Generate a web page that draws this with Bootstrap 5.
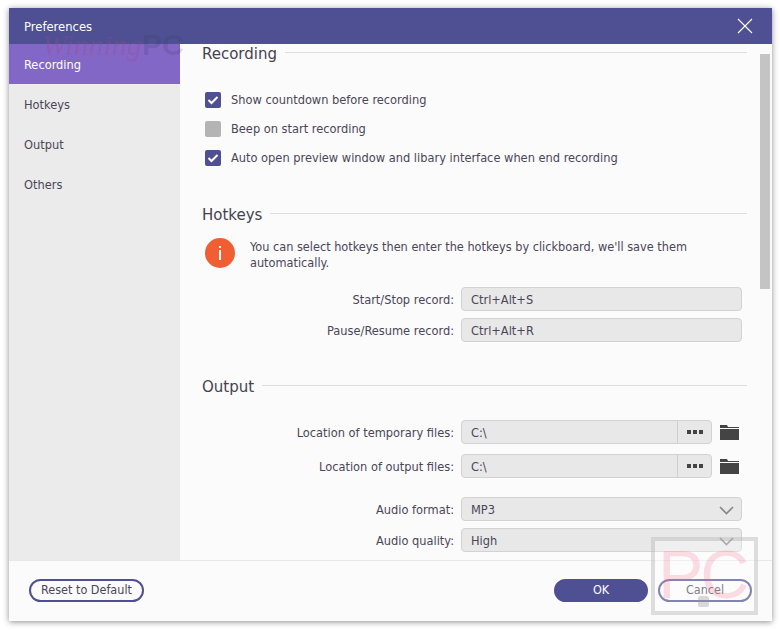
<!DOCTYPE html>
<html lang="en">
<head>
<meta charset="utf-8">
<title>Preferences</title>
<link href="https://cdn.jsdelivr.net/npm/bootstrap@5.3.0/dist/css/bootstrap.min.css" rel="stylesheet">
<style>
html,body{height:100%;}
body{background:#fff;font-family:"DejaVu Sans Condensed","DejaVu Sans","Noto Sans",sans-serif;font-stretch:condensed;font-size:12.7px;color:#4a4658;overflow:hidden;padding:8px 8px 9px 9px;}
.pref-win{position:relative;width:763px;height:613px;background:#fbfbfb;box-shadow:0 1px 6px rgba(0,0,0,.45);}
.pref-title{height:36px;background:#4e5093;color:#fff;padding-left:15px;padding-right:19px;font-size:12.9px;}
.pref-title span{padding-top:2px;}
.pref-body{height:516px;}
.pref-side{width:171px;background:#ebebeb;}
.side-item{height:40px;padding-left:15px;padding-top:1px;font-size:12.7px;color:#4a4658;}
.side-item.on{background:#8367c7;color:#fff;}
.pref-main{width:592px;position:relative;overflow:hidden;padding:0 25px 0 22px;}
.sec-head{height:22px;font-size:16.7px;line-height:22px;color:#45424f;gap:8px;}
.sec-head::after{content:"";flex:1;border-top:1px solid #dedede;margin-top:-2px;}
.chk-list{margin-top:21px;}
.chk-row{height:29px;gap:10px;padding-left:3px;}
.chk-box{width:16px;height:16px;border-radius:2px;background:#4e5093;flex:none;}
.chk-box.off{background:#b4b4b4;}
.pref-main>.sec-head{margin-top:31px;}
.pref-main>.sec-head:first-child{margin-top:-2px;}
.pref-main>.sec-head.s-3{margin-top:33px;}
.info-row{margin-top:13px;height:42px;}
.info-dot{width:30px;height:30px;border-radius:50%;background:#f05f33;margin-left:3px;flex:none;}
.info-copy{padding-left:15px;line-height:16px;padding-top:1px;font-size:12.6px;}
.form-line{height:24px;gap:7px;}
.l-1,.l-2{margin-top:7px;}
.l-3{margin-top:23px;}
.l-4{margin-top:10px;}
.l-5{margin-top:19px;}
.form-lab{width:252px;text-align:right;flex:none;padding-top:2px;}
.fake-box{height:24px;background:#e8e8e8;border:1px solid #d2d2d2;border-radius:4px;padding:2px 7px 0 9px;flex:1;}
.fake-wide{width:281px;flex:none;}
.fake-split{width:251px;flex:none;padding:0;}
.fake-split .val{padding:2px 0 0 9px;flex:1;}
.fake-split .more{width:34px;height:100%;border-left:1px solid #cfcfcf;gap:2px;}
.more i{width:4px;height:4px;background:#444;display:block;}
.fold{margin-left:1px;}
.sb-track{position:absolute;right:2px;top:10px;width:10px;height:235px;background:#c4c4c4;}
.pref-foot{height:61px;padding:0 20px 2px;border-top:1px solid #e8e8e8;}
.pill{height:23px;border:2px solid #4e5093;border-radius:12px;background:#fbfbfb;color:#4a4658;font-size:12.5px;line-height:1;}
.pill-reset{width:115px;}
.pill-fill{width:94px;background:#4e5093;color:#fff;}
.pill-cancel{width:94px;}
.pill-pair{gap:10px;}
.wm-top{position:absolute;left:33px;top:16px;height:42px;gap:0;pointer-events:none;}
.wm-script{font-family:"Liberation Serif",serif;font-style:italic;font-size:30px;line-height:42px;color:rgba(165,70,125,.3);}
.wm-pc{font-family:"Liberation Sans",sans-serif;font-weight:700;font-size:30px;line-height:42px;color:rgba(60,60,90,.2);}
.wm-frame{position:absolute;left:642px;top:529px;width:107px;height:78px;border:4px solid rgba(150,150,150,.3);background:rgba(255,255,255,.3);pointer-events:none;}
.wm-frame span{display:block;font-family:"Liberation Sans",sans-serif;font-size:68px;line-height:66px;color:rgba(240,90,120,.2);padding-left:3px;letter-spacing:-3px;white-space:nowrap;}
.wm-dot{position:absolute;left:43px;bottom:4px;width:11px;height:11px;background:rgba(150,150,150,.35);border-radius:2px;}
</style>
</head>
<body>
<div class="pref-win d-flex flex-column">
  <div class="pref-title d-flex align-items-center justify-content-between">
    <span>Preferences</span>
    <svg width="16" height="16" viewBox="0 0 16 16"><path d="M1 1L15 15M15 1L1 15" stroke="#fff" stroke-width="1.1" fill="none"/></svg>
  </div>
  <div class="pref-body d-flex">
    <div class="pref-side">
      <div class="side-item on d-flex align-items-center">Recording</div>
      <div class="side-item d-flex align-items-center">Hotkeys</div>
      <div class="side-item d-flex align-items-center">Output</div>
      <div class="side-item d-flex align-items-center">Others</div>
    </div>
    <div class="pref-main">
      <div class="sec-head d-flex align-items-center">Recording</div>
      <div class="chk-list">
        <div class="chk-row d-flex align-items-center"><span class="chk-box d-flex align-items-center justify-content-center"><svg width="12" height="10" viewBox="0 0 12 10"><path d="M1.5 5L4.5 8L10.5 2" stroke="#fff" stroke-width="2" fill="none"/></svg></span>Show countdown before recording</div>
        <div class="chk-row d-flex align-items-center"><span class="chk-box off"></span>Beep on start recording</div>
        <div class="chk-row d-flex align-items-center"><span class="chk-box d-flex align-items-center justify-content-center"><svg width="12" height="10" viewBox="0 0 12 10"><path d="M1.5 5L4.5 8L10.5 2" stroke="#fff" stroke-width="2" fill="none"/></svg></span>Auto open preview window and libary interface when end recording</div>
      </div>
      <div class="sec-head d-flex align-items-center">Hotkeys</div>
      <div class="info-row d-flex align-items-start">
        <span class="info-dot d-flex align-items-center justify-content-center"><svg width="4" height="14" viewBox="0 0 4 14"><path d="M1 0h2v2H1zM1 4h2v10H1z" fill="#fff"/></svg></span>
        <div class="info-copy">You can select hotkeys then enter the hotkeys by clickboard, we'll save them automatically.</div>
      </div>
      <div class="form-line d-flex align-items-center l-1"><span class="form-lab">Start/Stop record:</span><div class="fake-box fake-wide d-flex align-items-center">Ctrl+Alt+S</div></div>
      <div class="form-line d-flex align-items-center l-2"><span class="form-lab">Pause/Resume record:</span><div class="fake-box fake-wide d-flex align-items-center">Ctrl+Alt+R</div></div>
      <div class="sec-head d-flex align-items-center s-3">Output</div>
      <div class="form-line d-flex align-items-center l-3"><span class="form-lab">Location of temporary files:</span><div class="fake-box fake-split d-flex align-items-center"><span class="val">C:\</span><span class="more d-flex align-items-center justify-content-center"><i></i><i></i><i></i></span></div>
        <svg class="fold" width="19" height="16" viewBox="0 0 19 16"><path d="M0 1h7l1 2h11v1H0zM0 5h19v11H0z" fill="#444"/></svg></div>
      <div class="form-line d-flex align-items-center l-4"><span class="form-lab">Location of output files:</span><div class="fake-box fake-split d-flex align-items-center"><span class="val">C:\</span><span class="more d-flex align-items-center justify-content-center"><i></i><i></i><i></i></span></div>
        <svg class="fold" width="19" height="16" viewBox="0 0 19 16"><path d="M0 1h7l1 2h11v1H0zM0 5h19v11H0z" fill="#444"/></svg></div>
      <div class="form-line d-flex align-items-center l-5"><span class="form-lab">Audio format:</span><div class="fake-box fake-wide d-flex align-items-center justify-content-between">MP3<svg width="15" height="9" viewBox="0 0 15 9"><path d="M1 1L7.5 7.5L14 1" stroke="#888" stroke-width="1.7" fill="none"/></svg></div></div>
      <div class="form-line d-flex align-items-center l-2"><span class="form-lab">Audio quality:</span><div class="fake-box fake-wide d-flex align-items-center justify-content-between">High<svg width="15" height="9" viewBox="0 0 15 9"><path d="M1 1L7.5 7.5L14 1" stroke="#888" stroke-width="1.7" fill="none"/></svg></div></div>
      <div class="sb-track"></div>
    </div>
  </div>
  <div class="pref-foot d-flex align-items-center justify-content-between">
    <button type="button" class="pill pill-reset p-0">Reset to Default</button>
    <div class="d-flex pill-pair">
      <button type="button" class="pill pill-fill p-0">OK</button>
      <button type="button" class="pill pill-cancel p-0">Cancel</button>
    </div>
  </div>
  <div class="wm-top d-flex align-items-center"><span class="wm-script">Winning</span><span class="wm-pc">PC</span></div>
  <div class="wm-frame"><span>PC</span><b class="wm-dot"></b></div>
</div>
</body>
</html>
